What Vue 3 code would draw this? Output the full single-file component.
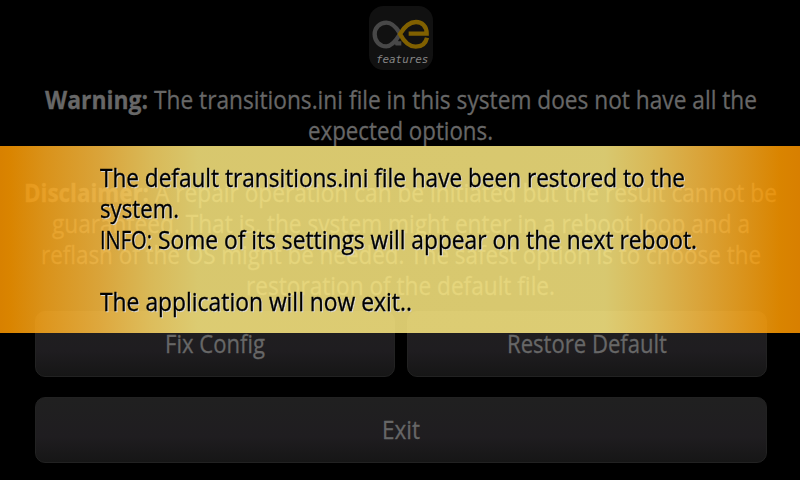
<template>
  <div class="screen">
    <div class="page">
      <svg class="logo" viewBox="27 18 192 192">
        <rect class="tile" x="27" y="18" width="192" height="192" rx="44" />
        <path
          class="alpha"
          d="M119 99 C106 78 95 68 79 68 C59 68 44 83 44 103 C44 124 59 139 79 139 C96 139 108 122 119 104 M105 117 L111 130 L124 130"
        />
        <path
          class="euro"
          d="M146 101 H200 C200 79 186 66 168 66 C148 66 132 82 120 102 C132 125 147 140 167 140 C185 140 197 130 201 113"
        />
        <text x="48" y="189" textLength="157" lengthAdjust="spacingAndGlyphs">
          features
        </text>
      </svg>

      <div class="message">
        <div class="line" v-for="(line, i) in message" :key="i">
          <svg
            v-for="part in line"
            :key="part.text"
            class="part"
            :class="{ bold: part.bold }"
            :width="part.width"
            height="31"
          >
            <text
              x="0"
              y="23"
              :textLength="part.width"
              lengthAdjust="spacingAndGlyphs"
            >{{ part.text }}</text>
          </svg>
        </div>
      </div>

      <div class="buttons">
        <button
          v-for="button in buttons"
          :key="button.text"
          :class="{ wide: button.wide }"
        >
          <svg class="part" :width="button.width" height="31">
            <text
              x="0"
              y="23"
              :textLength="button.width"
              lengthAdjust="spacingAndGlyphs"
            >{{ button.text }}</text>
          </svg>
        </button>
      </div>
    </div>

    <div class="banner">
      <div class="banner-line" v-for="(line, i) in banner" :key="i">
        <svg
          v-for="part in line"
          :key="part.text"
          class="part"
          :width="part.width"
          height="31"
        >
          <text
            x="0"
            y="23"
            :textLength="part.width"
            lengthAdjust="spacingAndGlyphs"
          >{{ part.text }}</text>
        </svg>
      </div>
    </div>
  </div>
</template>

<script setup>
const message = [
  [
    { text: "Warning:", width: 103, bold: true },
    {
      text: "The transitions.ini file in this system does not have all the",
      width: 603,
    },
  ],
  [{ text: "expected options.", width: 185 }],
  [],
  [
    { text: "Disclaimer:", width: 125, bold: true },
    {
      text: "A repair operation can be initiated but the result cannot be",
      width: 622,
    },
  ],
  [
    {
      text: "guaranteed. That is, the system might enter in a reboot loop and a",
      width: 698,
    },
  ],
  [
    {
      text: "reflash of the OS might be needed. The safest option is to choose the",
      width: 720,
    },
  ],
  [{ text: "restoration of the default file.", width: 309 }],
];

const buttons = [
  { text: "Fix Config", width: 100 },
  { text: "Restore Default", width: 160 },
  { text: "Exit", width: 38, wide: true },
];

const banner = [
  [
    {
      text: "The default transitions.ini file have been restored to the",
      width: 585,
    },
  ],
  [{ text: "system.", width: 79 }],
  [
    { text: "INFO:", width: 52 },
    {
      text: "Some of its settings will appear on the next reboot.",
      width: 539,
    },
  ],
  [],
  [{ text: "The application will now exit..", width: 312 }],
];
</script>

<style>
body {
  margin: 0;
  background: #000;
}
</style>

<style scoped>
.screen {
  position: relative;
  width: 800px;
  height: 480px;
  overflow: hidden;
  background: #000;
  font-family: "Open Sans", "Noto Sans", sans-serif;
  font-size: 25px;
  font-weight: 500;
}
.page {
  display: flex;
  flex-direction: column;
  align-items: center;
  padding: 6px 0 0 1px;
}
.logo {
  display: block;
  width: 64px;
  height: 64px;
}
.tile {
  fill: #111;
}
.alpha,
.euro {
  fill: none;
  stroke-width: 13;
}
.alpha {
  stroke: #484848;
}
.euro {
  stroke: #806000;
}
.logo text {
  fill: #858585;
  font: italic 34px "DejaVu Sans Mono", monospace;
}
.message {
  margin-top: 16px;
}
.line {
  display: flex;
  justify-content: center;
  gap: 6px;
  height: 31px;
}
.part {
  display: block;
  overflow: visible;
  fill: #676767;
  stroke: #676767;
  stroke-width: 0.3px;
}
.bold {
  font-weight: 700;
}
.buttons {
  display: grid;
  grid-template-columns: 360px 360px;
  gap: 20px 12px;
  margin-top: 8px;
}
button {
  display: flex;
  justify-content: center;
  align-items: center;
  box-sizing: border-box;
  height: 66px;
  padding: 3px 0 0;
  border: 1px solid #222;
  border-radius: 10px;
  background: linear-gradient(#202020, #1f1d20 60%, #161616);
  font: inherit;
}
.wide {
  grid-column: span 2;
}

/* translucent notification laid over the page */
.banner {
  position: absolute;
  top: 146px;
  left: 0;
  box-sizing: border-box;
  width: 800px;
  height: 187px;
  padding: 18px 100px 0;
  background: linear-gradient(
    90deg,
    rgba(248, 148, 0, 0.87) 0,
    rgba(250, 152, 0, 0.87) 10px,
    rgba(250, 168, 30, 0.87) 45px,
    rgba(250, 188, 66, 0.87) 100px,
    rgba(249, 212, 100, 0.87) 150px,
    rgba(248, 229, 126, 0.87) 198px,
    rgba(248, 230, 128, 0.87) 605px,
    rgba(249, 212, 100, 0.87) 650px,
    rgba(250, 188, 66, 0.87) 700px,
    rgba(250, 168, 30, 0.87) 745px,
    rgba(250, 152, 0, 0.87) 780px,
    rgba(248, 146, 0, 0.87) 800px
  );
}
.banner-line {
  display: flex;
  gap: 6px;
  height: 31px;
}
.banner .part {
  fill: #000;
  stroke: #000;
  filter: drop-shadow(1px 1px 0 #d8d8d8);
}
</style>
